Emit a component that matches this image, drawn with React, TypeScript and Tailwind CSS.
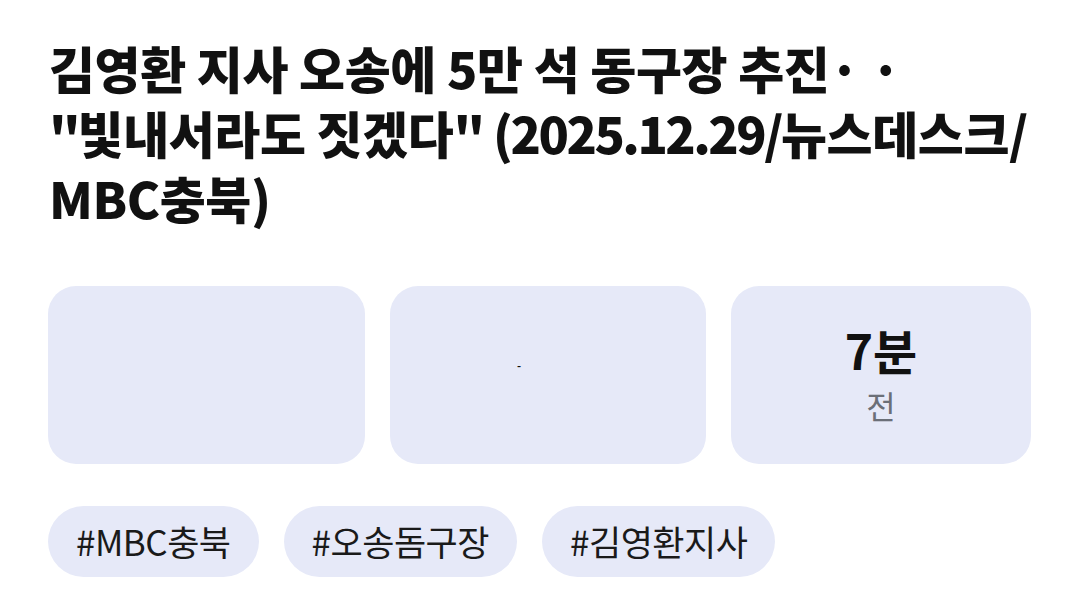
import React from "react";

const FONT = { fontFamily: '"Noto Sans CJK KR", "Noto Sans", sans-serif' };

const TAGS = ["#MBC충북", "#오송돔구장", "#김영환지사"];

export default function App() {
  return (
    <div className="w-[1080px] h-[604px] bg-white overflow-hidden px-12 pt-[35px]" style={FONT}>
      {/* Headline */}
      <h1 className="text-[50px] leading-[65px] font-extrabold text-[#111] tracking-[-0.4px] pl-[1px] whitespace-nowrap">
        <span className="block">김영환 지사 오송에 5만 석 동구장 추진· ·</span>
        <span className="block">
          <span className="tracking-[-3px]">"</span>빛내서라도 짓겠다<span className="tracking-[-3px]">"</span>{" "}
          <span className="tracking-[-2.5px]">(2025.12.29/</span>뉴스데스크/
        </span>
        <span className="block">MBC충북)</span>
      </h1>

      {/* Info cards */}
      <div className="mt-[56px] grid grid-cols-[317px_316px_300px] gap-[25px] h-[178px]">
        <div className="rounded-[28px] bg-[#e6e9f8]" />
        <div className="rounded-[28px] bg-[#e6e9f8] flex items-center pl-[127px] pb-[20px]">
          <span className="text-[11px] leading-none font-bold text-[#111]">-</span>
        </div>
        <div className="rounded-[28px] bg-[#e6e9f8] flex flex-col items-center justify-center">
          <div className="text-[48px] leading-[52px] font-bold text-[#111]">7분</div>
          <div className="mt-[8px] text-[32px] leading-[44px] text-[#6b6f78]">전</div>
        </div>
      </div>

      {/* Tags */}
      <div className="mt-[42px] flex gap-[25px]">
        {TAGS.map((t) => (
          <span
            key={t}
            className="h-[71px] px-[28px] rounded-full bg-[#e6e9f8] flex items-center text-[35px] tracking-[-0.5px] text-[#1a1a1a]"
          >
            {t}
          </span>
        ))}
      </div>
    </div>
  );
}
